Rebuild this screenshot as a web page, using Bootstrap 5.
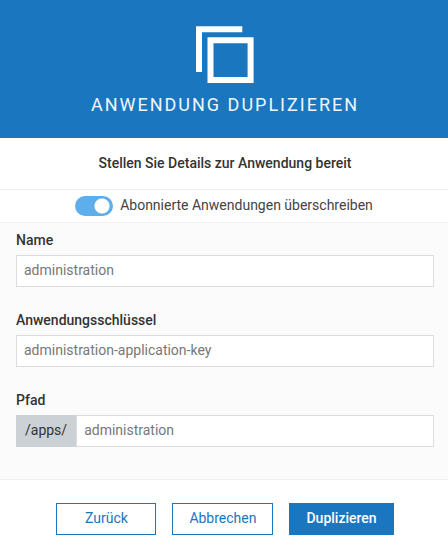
<!DOCTYPE html>
<html lang="de">
<head>
<meta charset="utf-8">
<meta name="viewport" content="width=device-width, initial-scale=1">
<title>Anwendung duplizieren</title>
<link href="https://cdn.jsdelivr.net/npm/bootstrap@5.3.0/dist/css/bootstrap.min.css" rel="stylesheet">
<style>
body { font-family: Roboto, "Liberation Sans", sans-serif; font-size: 14px; line-height: 20px; color: #333; background: #fff; }
.dialog-head { background: #1a76bf; padding: 24px 14px 21px 16px; }
.dialog-head h1 { font-size: 18px; line-height: 24px; font-weight: 400; letter-spacing: 2px; margin-top: 7px; color: #f0f6fb; }
.dialog-sub { font-size: 14px; line-height: 20px; font-weight: 500; padding: 15px 14px 16px 16px; }
.line { border-bottom: 1px solid #f0f0f0; }
.switch-row { padding: 6px 16px; color: #444; }
.switch-row .form-check-input { width: 38px; height: 20px; margin: 0 7px 0 0; float: none; border: 0; background-color: #5eaeec; background-image: radial-gradient(circle, #fff 6px, #fff 7px, transparent 8px); background-size: 20px 20px; background-repeat: no-repeat; border-radius: 10px; }
.switch-row .form-check-input:checked { background-position: 17px center; }
.switch-row .form-check-input:not(:checked) { background-color: #adb5bd; background-position: 1px center; }
.switch-row .form-check-label { line-height: 18px; }
.fields { background: #fbfbfb; padding: 7px 14px 32px 16px; }
.fields .form-label { font-weight: 500; line-height: 20px; margin-bottom: 5px; }
.fields .form-control, .fields .input-group-text { height: 32px; font-size: 14px; line-height: 20px; border-radius: 0; padding: 4px 8px 6px 7px; }
.fields .field { margin-bottom: 23px; }
.fields .form-control { border-color: #dcdcdc; color: #777; background: #fff; }
.fields .input-group-text { background: #cbd1d5; border-color: #cbd1d5; color: #333; padding-left: 8px; padding-right: 9px; }
.actions { padding: 23px 14px 23px 16px; }
.actions .btn { --bs-btn-font-size: 14px; --bs-btn-line-height: 20px; --bs-btn-border-radius: 0; padding: 4px 16px 6px; min-width: 100px; }
.actions .btn-outline-primary { --bs-btn-color: #1a76bf; --bs-btn-border-color: #1a76bf; background: #fff; }
.actions .btn-primary { --bs-btn-bg: #1a76bf; --bs-btn-border-color: #1a76bf; --bs-btn-font-weight: 500; }
</style>
</head>
<body>
<form>
  <header class="dialog-head text-center text-white">
    <svg class="d-block mx-auto" width="64" height="62" viewBox="0 0 64 62" fill="none" stroke="#fff" stroke-width="6" aria-hidden="true">
      <path d="M6 48V5.200H49.300"/>
      <path d="M17.500 16.300H57.600V56H17.500Z"/>
    </svg>
    <h1 class="mb-0 text-uppercase">Anwendung duplizieren</h1>
  </header>
  <h2 class="dialog-sub line text-center mb-0">Stellen Sie Details zur Anwendung bereit</h2>
  <div class="switch-row line form-check form-switch d-flex justify-content-center mb-0">
    <input class="form-check-input" type="checkbox" role="switch" id="override" checked>
    <label class="form-check-label" for="override">Abonnierte Anwendungen überschreiben</label>
  </div>
  <div class="fields line">
    <div class="field">
      <label class="form-label" for="app-name">Name</label>
      <input class="form-control" type="text" id="app-name" value="administration">
    </div>
    <div class="field">
      <label class="form-label" for="app-key">Anwendungsschlüssel</label>
      <input class="form-control" type="text" id="app-key" value="administration-application-key">
    </div>
    <div>
      <label class="form-label" for="app-path">Pfad</label>
      <div class="input-group">
        <span class="input-group-text">/apps/</span>
        <input class="form-control" type="text" id="app-path" value="administration">
      </div>
    </div>
  </div>
  <div class="actions d-flex justify-content-center gap-3">
    <button type="button" class="btn btn-outline-primary">Zurück</button>
    <button type="button" class="btn btn-outline-primary">Abbrechen</button>
    <button type="submit" class="btn btn-primary">Duplizieren</button>
  </div>
</form>
<script src="https://cdn.jsdelivr.net/npm/bootstrap@5.3.0/dist/js/bootstrap.bundle.min.js"></script>
</body>
</html>
